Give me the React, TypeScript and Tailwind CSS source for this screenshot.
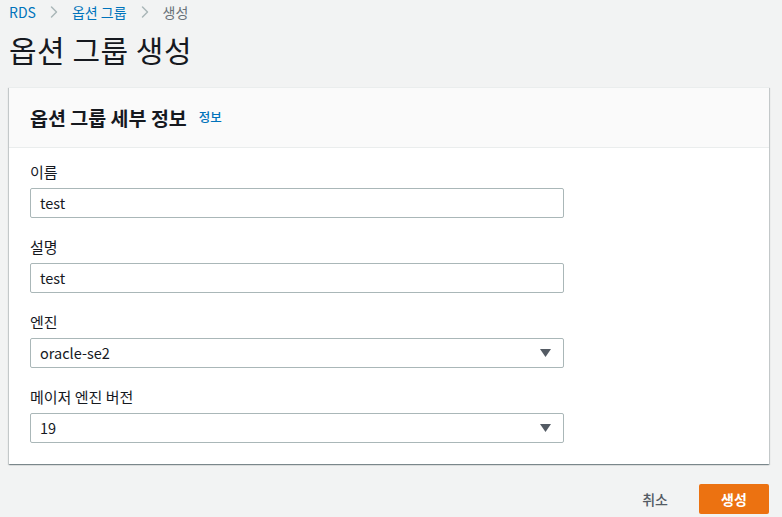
import { ChevronRight } from 'lucide-react'

const font = { fontFamily: '"Noto Sans CJK KR", "Noto Sans", "Open Sans", sans-serif' }

function Field({ label, value, select }: { label: string; value: string; select?: boolean }) {
  return (
    <div className="mb-[19px]">
      <div className="text-[15px] leading-[20px] text-[#16191f] mb-[6px]">{label}</div>
      <div className="flex items-center h-[30px] w-[534px] rounded-[2px] border border-[#aab7b8] bg-white pl-[9px] pr-[12px]">
        <span className="flex-1 text-[14.5px] text-[#16191f]">{value}</span>
        {select && (
          <svg width="11" height="8" viewBox="0 0 11 8"><path d="M0 0h11L5.5 8z" fill="#545b64" /></svg>
        )}
      </div>
    </div>
  )
}

export default function App() {
  return (
    <div className="min-h-[517px] bg-[#f2f3f3] px-[9px]" style={font}>
      <div className="flex items-center h-[23px] text-[14px] pt-[1px]">
        <span className="text-[#0073bb]">RDS</span>
        <ChevronRight size={20} className="mx-[8px] text-[#aab7b8]" strokeWidth={1.75} />
        <span className="text-[#0073bb]">옵션 그룹</span>
        <ChevronRight size={20} className="mx-[8px] text-[#aab7b8]" strokeWidth={1.75} />
        <span className="text-[#687078]">생성</span>
      </div>
      <h1 className="text-[30px] leading-[50px] text-[#16191f] font-normal mt-[1px] tracking-[0.5px]">옵션 그룹 생성</h1>
      <div className="mt-[13px] w-[760px] bg-white shadow-[0_1px_1px_0_rgba(0,28,36,0.3),1px_1px_1px_0_rgba(0,28,36,0.15),-1px_1px_1px_0_rgba(0,28,36,0.15)] border-t border-[#eaeded]">
        <div className="h-[60px] flex items-center px-[21px] bg-[#fafafa] border-b border-[#eaeded]">
          <span className="text-[19.5px] font-bold text-[#16191f]">옵션 그룹 세부 정보</span>
          <span className="ml-[12px] text-[12.5px] text-[#0073bb] font-medium">정보</span>
        </div>
        <div className="px-[21px] pt-[14px] pb-[2px]">
          <Field label="이름" value="test" />
          <Field label="설명" value="test" />
          <Field label="엔진" value="oracle-se2" select />
          <Field label="메이저 엔진 버전" value="19" select />
        </div>
      </div>
      <div className="w-[760px] flex justify-end items-center mt-[20px] gap-[31px]">
        <span className="text-[14px] text-[#545b64] font-medium">취소</span>
        <button className="h-[30px] w-[70px] rounded-[2px] bg-[#ec7211] text-white text-[14px] font-bold">생성</button>
      </div>
    </div>
  )
}
